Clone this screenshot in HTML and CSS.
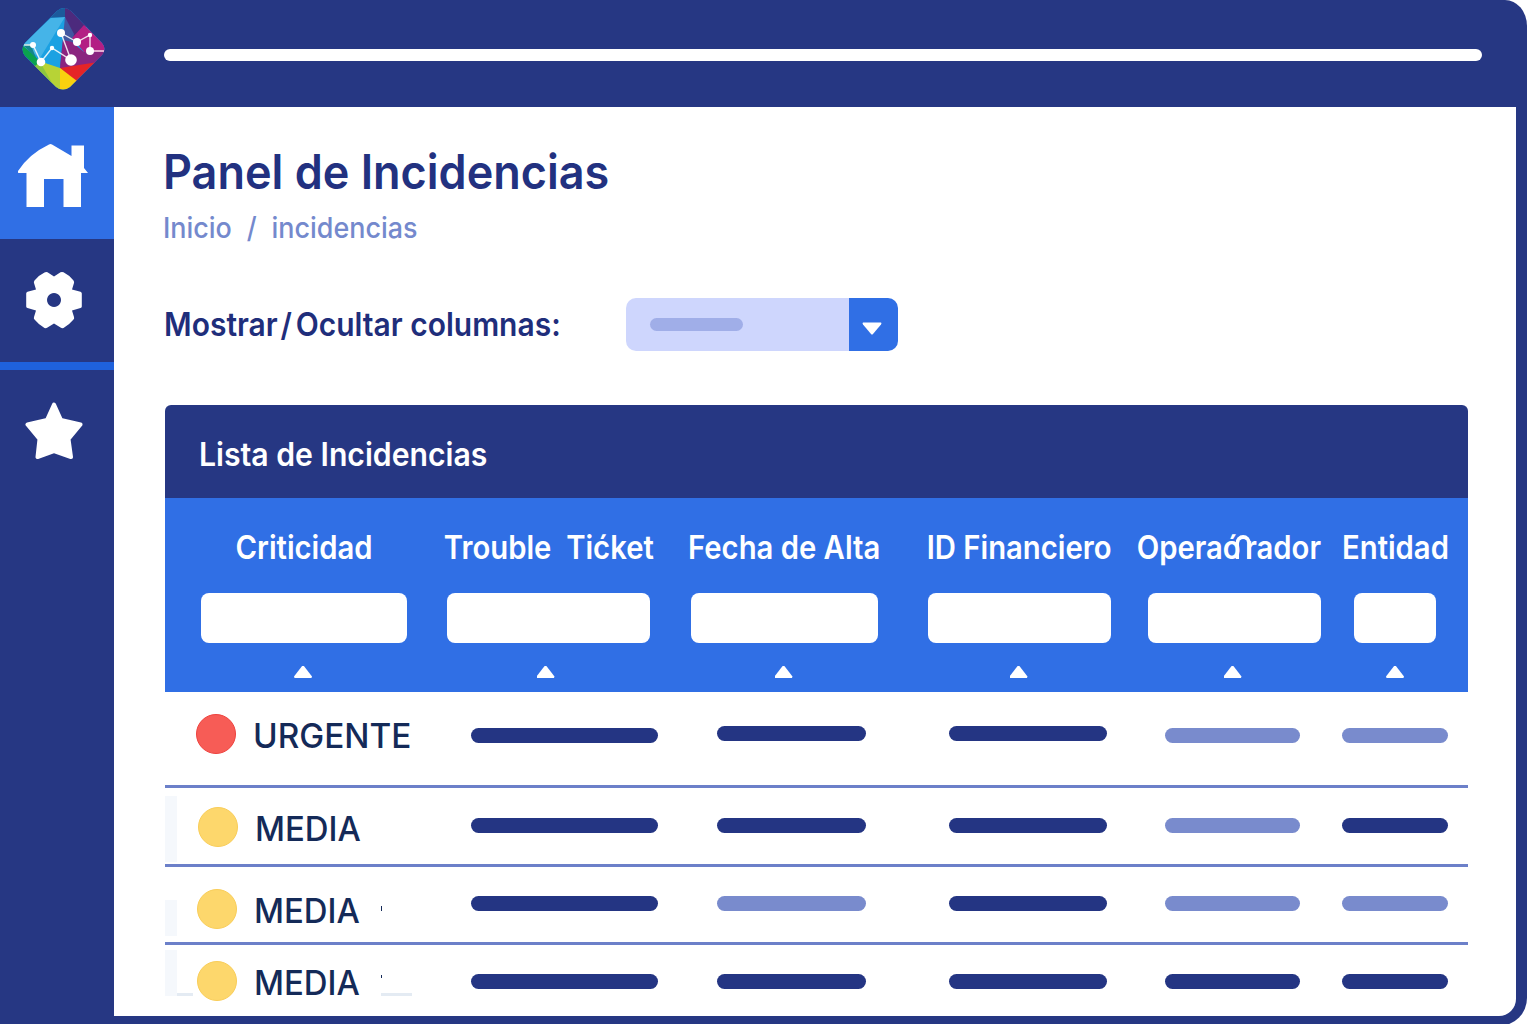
FILE: index.html
```html
<!DOCTYPE html>
<html lang="es">
<head>
    <meta charset="UTF-8">
    <meta name="viewport" content="width=device-width, initial-scale=1.0">
    <title>Panel de Incidencias</title>
    <link rel="stylesheet" href="styles.css">
</head>
<body>
    <div class="window">
        <header class="topbar">
            <svg class="logo" width="84" height="84" viewBox="0 0 84 84">
                <defs>
                    <clipPath id="diamond"><path d="M35 3 Q42 -3 49 3 L80 35 Q85 41 80 47 L48 79 Q41 84 34 79 L3 48 Q-2 41 3 35 Z"/></clipPath>
                </defs>
                <g clip-path="url(#diamond)">
                    <rect width="84" height="84" fill="#1ba1e2"/>
                    <path d="M43 9 L29 10 L-2 38 L10 44 L18 50 Z" fill="#45b4e8"/>
                    <path d="M24 10 L42 -4 L50 0 L43 9 Z" fill="#1c5a9b"/>
                    <path d="M43 -4 L54 4 L66 16 L50 34 L43 9 Z" fill="#4c2a7d"/>
                    <path d="M43 9 L52 26 L50 36 L38 59 Z" fill="#4256a0"/>
                    <path d="M41 32 L50 34 L62 46 L84 42 L84 58 L38 60 Z" fill="#8a2580"/>
                    <path d="M50 30 L62 17 L88 41 L84 44 L62 44 Z" fill="#b31f84"/>
                    <path d="M50 34 L62 44 L84 45 L76 55 L38 60 Z" fill="#8a2580"/>
                    <path d="M38 60 L76 54 L54 74 Z" fill="#e52427"/>
                    <path d="M38 60 L55 73 L44 86 L36 84 Z" fill="#f9d10f"/>
                    <path d="M17 53 L38 60 L38 84 L12 58 Z" fill="#b7d336"/>
                    <path d="M18 54 L34 82 L12 58 Z" fill="#8cc63f"/>
                    <path d="M0 37 L12 47 L18 54 L13 58 L-3 42 Z" fill="#0ba24e"/>
                    <path d="M0 36 L9 37 L14 50 Z" fill="#14868c"/>
                </g>
                <path d="M2 37 H11 L19 54 L30 40 L49 52 L39 25 L55 34 L68 27 L68 43 H82" fill="none" stroke="#fff" stroke-opacity="0.85" stroke-width="1.4"/>
                <g fill="#fff">
                    <circle cx="11" cy="37" r="3"/>
                    <circle cx="19" cy="54" r="4.3"/>
                    <circle cx="30" cy="40" r="2.2"/>
                    <circle cx="49" cy="52" r="5.8"/>
                    <circle cx="39" cy="25" r="4"/>
                    <circle cx="55" cy="34" r="4"/>
                    <circle cx="68" cy="27" r="2.2"/>
                    <circle cx="68" cy="43" r="4"/>
                </g>
            </svg>
            <div class="search-line"></div>
        </header>

        <div class="body">
            <nav class="sidebar">
                <a class="nav-item home" href="#">
                    <svg width="70" height="64" viewBox="0 0 70 64"><path d="M34 0.500 Q32.500 -0.500 31 0.500 Q11 10 0 27 Q-0.500 29 1 29 H8.500 V63 H26 V35 H45.500 V63 H63 V29 H70 L66 24 V1.500 H53.500 V12 Z"/></svg>
                </a>
                <a class="nav-item gear" href="#">
                    <svg width="56" height="58" viewBox="0 0 56 58"><path fill-rule="evenodd" d="M18.500 1.500 Q20 0.500 21.500 1.300 L28 5.500 L34.500 1.300 Q36 0.500 37.500 1.300 Q43 4 47.500 9.500 Q48.500 11 48 12 L46 18.500 L54.500 20.800 Q55.800 21.200 55.800 22.500 V35.500 Q55.800 36.800 54.500 37 L46 39.500 L48 46 Q48.500 47.500 47.500 48.500 Q43 54 37.500 57 Q36 57.500 34.500 56.500 L28 52.500 L21.500 56.500 Q20 57.500 18.500 57 Q13 54 8.500 48.500 Q7.500 47.500 8 46 L10 39.500 L1.500 37 Q0.200 36.800 0.200 35.500 V22.500 Q0.200 21.200 1.500 20.800 L10 18.500 L8 12 Q7.500 11 8.500 9.500 Q13 4 18.500 1.500 Z M28 22 a7 7 0 1 0 0.010 0 Z"/></svg>
                </a>
                <a class="nav-item star" href="#">
                    <svg width="58" height="58" viewBox="0 0 58 58"><path stroke="#fff" stroke-width="4" stroke-linejoin="round" d="M29 2.500 L36 18 L55.500 22.500 L43.500 37 L46 55 L29 49 L12.500 55 L14.500 37 L2.500 22.500 L22 18 Z"/></svg>
                </a>
            </nav>

            <main class="content">
                <h1><span class="fit">Panel de Incidencias</span></h1>
                <div class="breadcrumb fit"><span>Inicio</span><span class="sep">/</span><span>incidencias</span></div>

                <div class="columns-row">
                    <label><span class="fit">Mostrar<span class="slash">/</span>Ocultar columnas:</span></label>
                    <div class="select">
                        <div class="select-value"><i></i></div>
                        <div class="select-btn">
                            <svg width="20" height="13" viewBox="0 0 20 13"><path d="M1 0.500 H19 Q20 1 19 2.500 L11 12 Q10 13 9 12 L1 2.500 Q0 1 1 0.500 Z"/></svg>
                        </div>
                    </div>
                </div>

                <section class="table">
                    <h2><span class="fit">Lista de Incidencias</span></h2>
                    <div class="thead">
                        <div class="th c1"><span class="name">Criticidad</span><input type="text"><i class="arrow"></i></div>
                        <div class="th c2"><span class="name">Trouble&nbsp; Tićket</span><input type="text"><i class="arrow"></i></div>
                        <div class="th c3"><span class="name">Fecha de Alta</span><input type="text"><i class="arrow"></i></div>
                        <div class="th c4"><span class="name">ID Financiero</span><input type="text"><i class="arrow"></i></div>
                        <div class="th c5"><span class="name">Operaó<i class="hook"></i>rador</span><input type="text"><i class="arrow"></i></div>
                        <div class="th c6"><span class="name">Entidad</span><input type="text"><i class="arrow"></i></div>
                    </div>
                    <div class="row r1">
                        <div class="level urgent"><i></i><span>URGENTE</span></div>
                        <b class="bar"></b><b class="bar up"></b><b class="bar up"></b><b class="bar light"></b><b class="bar light"></b>
                    </div>
                    <div class="row r2">
                        <div class="level"><i></i><span>MEDIA</span></div>
                        <b class="bar"></b><b class="bar"></b><b class="bar"></b><b class="bar light"></b><b class="bar"></b>
                    </div>
                    <div class="row r3">
                        <div class="level"><i></i><span>MEDIA</span></div>
                        <b class="bar"></b><b class="bar light"></b><b class="bar"></b><b class="bar light"></b><b class="bar light"></b>
                        <em class="tick"></em>
                    </div>
                    <div class="row r4">
                        <div class="level"><i></i><span>MEDIA</span></div>
                        <b class="bar"></b><b class="bar"></b><b class="bar"></b><b class="bar"></b><b class="bar"></b>
                        <em class="tick"></em><em class="dash left"></em><em class="dash right"></em>
                    </div>
                </section>
            </main>
        </div>
    </div>
</body>
</html>
```

FILE: styles.css
```css
* {
    box-sizing: border-box;
}

body {
    margin: 0;
    height: 1024px;
    overflow: hidden;
    background: #fff;
    color: #243580;
    font-family: Inter, "Liberation Sans", sans-serif;
}

.window {
    width: 1527px;
    height: 1026px;
    padding: 0 11px 10px 0;
    background: #263783;
    border-radius: 0 22px 28px 0 / 0 26px 28px 0;
    display: flex;
    flex-direction: column;
}

.topbar {
    height: 107px;
    padding: 8px 0 0 22px;
    display: flex;
    align-items: flex-start;
}

.search-line {
    width: 1318px;
    height: 12px;
    margin: 41px 0 0 58px;
    border-radius: 6px;
    background: #fff;
}

.body {
    flex: 1;
    display: flex;
}

/* sidebar */
.sidebar {
    width: 114px;
}

.nav-item {
    display: flex;
    justify-content: center;
    align-items: center;
    padding-right: 6px;
    fill: #fff;
}

.home {
    height: 132px;
    padding: 5px 8px 0 0;
    background: #306fe5;
}

.gear {
    height: 131px;
    padding-bottom: 2px;
    border-bottom: 8px solid #1f61dc;
}

.star {
    height: 122px;
}

.content {
    width: 1402px;
    padding: 40px 48px 0 49px;
    background: #fff;
    border-radius: 0 0 17px 0;
}

/* condensed text */
.fit,
.name {
    display: inline-block;
    white-space: nowrap;
    transform: scaleX(0.937);
    transform-origin: left center;
}

h1 {
    margin: 0;
    font-size: 48px;
    line-height: 50px;
    font-weight: 600;
    color: #223180;
}

.breadcrumb {
    display: flex;
    margin-top: 13px;
    font-size: 29px;
    line-height: 36px;
    font-weight: 500;
    color: #7489cd;
    transform: scaleX(0.928);
}

.sep {
    margin: 0 16px;
}

.columns-row {
    display: flex;
    align-items: center;
    height: 53px;
    margin: 52px 0 0 1px;
}

.columns-row label {
    width: 462px;
    font-size: 32px;
    font-weight: 600;
    color: #1f2e7b;
}

.slash {
    margin: 0 4px 0 3px;
}

.select {
    display: flex;
    width: 272px;
    height: 53px;
    border-radius: 10px;
    overflow: hidden;
}

.select-value {
    flex: 1;
    padding: 20px 24px;
    background: #ced6fd;
}

.select-value i {
    display: block;
    width: 93px;
    height: 13px;
    border-radius: 7px;
    background: #a0aee8;
}

.select-btn {
    width: 49px;
    display: flex;
    align-items: center;
    justify-content: center;
    padding: 7px 3px 0 0;
    background: #306fe5;
    fill: #fff;
}

/* table */
.table {
    width: 1303px;
    margin: 54px 0 0 2px;
}

h2 {
    height: 93px;
    margin: 0;
    padding: 5px 0 0 34px;
    border-radius: 6px 6px 0 0;
    background: #263783;
    color: #fff;
    font-size: 32px;
    line-height: 90px;
    font-weight: 600;
}

h2 .fit {
    transform: scaleX(0.943);
}

.thead {
    display: flex;
    height: 194px;
    padding: 30px 0 0 36px;
    background: #306fe5;
}

.th {
    display: flex;
    flex-direction: column;
    align-items: center;
}

.c1 { width: 206px; }
.c2 { width: 203px; margin-left: 40px; }
.c3 { width: 187px; margin-left: 41px; }
.c4 { width: 183px; margin-left: 50px; }
.c5 { width: 173px; margin-left: 37px; }
.c6 { width: 82px; margin-left: 33px; }

.name {
    height: 65px;
    color: #fff;
    font-size: 32px;
    line-height: 40px;
    font-weight: 600;
    transform: scaleX(0.914);
    transform-origin: center;
}

.c5 .name {
    margin-right: 11px;
}

.hook {
    display: inline-block;
    width: 17px;
    height: 24px;
    margin: 0 -6px 0 -6px;
    border: 4px solid #fff;
    border-bottom: none;
    border-radius: 9px 9px 0 0;
}

.th input {
    width: 100%;
    height: 50px;
    padding: 0 12px;
    border: none;
    border-radius: 8px;
    background: #fff;
}

.arrow {
    width: 18px;
    height: 12px;
    margin: 23px 2px 0 0;
    background: #fff;
    clip-path: polygon(45% 0, 55% 0, 100% 88%, 97% 100%, 3% 100%, 0 88%);
}

.c2 .arrow { margin-right: 6px; }
.c5 .arrow { margin-right: 4px; }
.c6 .arrow { margin-right: 0; }

.row {
    position: relative;
    display: grid;
    grid-template-columns: 306px 246px 232px 216px 177px 126px;
    border-bottom: 3px solid #6c80c9;
}

.r1 { height: 96px; }
.r2 { height: 79px; }
.r3 { height: 78px; }
.r4 { height: 71px; border: none; }

.level {
    display: flex;
    align-items: center;
    height: 40px;
    gap: 16px;
    margin: 22px 0 0 32px;
    font-size: 34px;
    font-weight: 500;
    color: #142a58;
}

.level span {
    padding: 3px 0 0 1px;
    transform: scaleX(0.968);
    transform-origin: left center;
}

.level.urgent span {
    transform: scaleX(0.98);
}

.r1 .level { margin-left: 31px; }
.r2 .level { margin: 19px 0 0 33px; }
.r4 .level { margin-top: 16px; }

.level i {
    width: 40px;
    height: 40px;
    border-radius: 50%;
    background: #fdd76c;
    border: 1px solid #f9cd58;
}

.level.urgent i {
    background: #f75c56;
    border-color: #ee423e;
}

.bar {
    height: 15px;
    margin-top: 29px;
    border-radius: 8px;
    background: #243583;
}

.bar.light {
    background: #798bcd;
}

.bar:nth-child(2) { width: 187px; }
.bar:nth-child(3) { width: 149px; }
.bar:nth-child(4) { width: 158px; }
.bar:nth-child(5) { width: 135px; }
.bar:nth-child(6) { width: 106px; }

.r1 .bar { margin-top: 36px; }
.r1 .bar.up { margin-top: 34px; }
.r2 .bar { margin-top: 30px; }

/* faint marks round the rows */
.row::before {
    content: "";
    position: absolute;
    left: 0;
    width: 12px;
    background: #f5f8fc;
}

.r2::before { top: 8px; height: 66px; }
.r3::before { top: 33px; height: 36px; }
.r4::before { top: 5px; height: 46px; }

.tick {
    position: absolute;
    left: 216px;
    top: 39px;
    width: 1px;
    height: 5px;
    background: #142a58;
}

.r4 .tick {
    top: 30px;
    height: 3px;
}

.dash {
    position: absolute;
    top: 48px;
    height: 3px;
    background: #e4ebf3;
}

.dash.left { left: 12px; width: 16px; }
.dash.right { left: 216px; width: 31px; }
```
